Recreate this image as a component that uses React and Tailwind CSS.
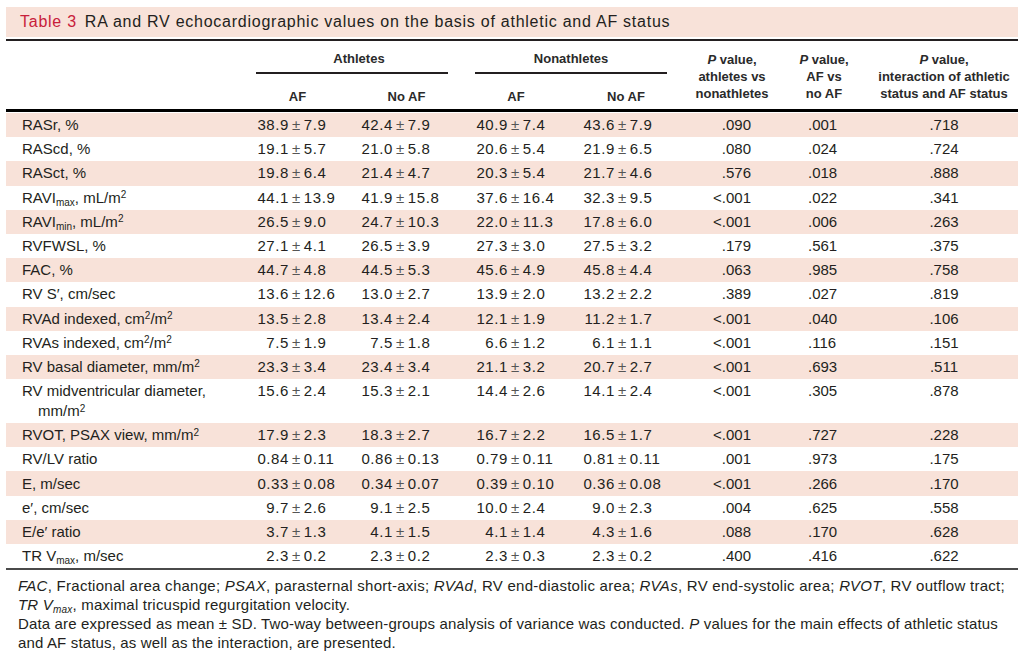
import React from "react";

const Sup = ({ children }) => <sup className="text-[10px] top-[-4.5px]">{children}</sup>;
const Sub = ({ children }) => <sub className="text-[10px] bottom-[-3px]">{children}</sub>;

const rows = [
  { l: <>RASr, %</>, v: [["38.9", "7.9"], ["42.4", "7.9"], ["40.9", "7.4"], ["43.6", "7.9"]], p: [".090", ".001", ".718"] },
  { l: <>RAScd, %</>, v: [["19.1", "5.7"], ["21.0", "5.8"], ["20.6", "5.4"], ["21.9", "6.5"]], p: [".080", ".024", ".724"] },
  { l: <>RASct, %</>, v: [["19.8", "6.4"], ["21.4", "4.7"], ["20.3", "5.4"], ["21.7", "4.6"]], p: [".576", ".018", ".888"] },
  { l: <>RAVI<Sub>max</Sub>, mL/m<Sup>2</Sup></>, v: [["44.1", "13.9"], ["41.9", "15.8"], ["37.6", "16.4"], ["32.3", "9.5"]], p: ["<.001", ".022", ".341"] },
  { l: <>RAVI<Sub>min</Sub>, mL/m<Sup>2</Sup></>, v: [["26.5", "9.0"], ["24.7", "10.3"], ["22.0", "11.3"], ["17.8", "6.0"]], p: ["<.001", ".006", ".263"] },
  { l: <>RVFWSL, %</>, v: [["27.1", "4.1"], ["26.5", "3.9"], ["27.3", "3.0"], ["27.5", "3.2"]], p: [".179", ".561", ".375"] },
  { l: <>FAC, %</>, v: [["44.7", "4.8"], ["44.5", "5.3"], ["45.6", "4.9"], ["45.8", "4.4"]], p: [".063", ".985", ".758"] },
  { l: <>RV S′, cm/sec</>, v: [["13.6", "12.6"], ["13.0", "2.7"], ["13.9", "2.0"], ["13.2", "2.2"]], p: [".389", ".027", ".819"] },
  { l: <>RVAd indexed, cm<Sup>2</Sup>/m<Sup>2</Sup></>, v: [["13.5", "2.8"], ["13.4", "2.4"], ["12.1", "1.9"], ["11.2", "1.7"]], p: ["<.001", ".040", ".106"] },
  { l: <>RVAs indexed, cm<Sup>2</Sup>/m<Sup>2</Sup></>, v: [["7.5", "1.9"], ["7.5", "1.8"], ["6.6", "1.2"], ["6.1", "1.1"]], p: ["<.001", ".116", ".151"] },
  { l: <>RV basal diameter, mm/m<Sup>2</Sup></>, v: [["23.3", "3.4"], ["23.4", "3.4"], ["21.1", "3.2"], ["20.7", "2.7"]], p: ["<.001", ".693", ".511"] },
  { l: <>RV midventricular diameter,<br />mm/m<Sup>2</Sup></>, v: [["15.6", "2.4"], ["15.3", "2.1"], ["14.4", "2.6"], ["14.1", "2.4"]], p: ["<.001", ".305", ".878"], tall: true },
  { l: <>RVOT, PSAX view, mm/m<Sup>2</Sup></>, v: [["17.9", "2.3"], ["18.3", "2.7"], ["16.7", "2.2"], ["16.5", "1.7"]], p: ["<.001", ".727", ".228"] },
  { l: <>RV/LV ratio</>, v: [["0.84", "0.11"], ["0.86", "0.13"], ["0.79", "0.11"], ["0.81", "0.11"]], p: [".001", ".973", ".175"] },
  { l: <>E, m/sec</>, v: [["0.33", "0.08"], ["0.34", "0.07"], ["0.39", "0.10"], ["0.36", "0.08"]], p: ["<.001", ".266", ".170"] },
  { l: <>e′, cm/sec</>, v: [["9.7", "2.6"], ["9.1", "2.5"], ["10.0", "2.4"], ["9.0", "2.3"]], p: [".004", ".625", ".558"] },
  { l: <>E/e′ ratio</>, v: [["3.7", "1.3"], ["4.1", "1.5"], ["4.1", "1.4"], ["4.3", "1.6"]], p: [".088", ".170", ".628"] },
  { l: <>TR V<Sub>max</Sub>, m/sec</>, v: [["2.3", "0.2"], ["2.3", "0.2"], ["2.3", "0.3"], ["2.3", "0.2"]], p: [".400", ".416", ".622"] },
];

const colW = ["w-[105px]", "w-[113px]", "w-[110px]", "w-[108px]"];
const boxW = ["w-[39px]", "w-[38px]", "w-[40px]", "w-[37px]"];

function Val({ a, b, i }) {
  return (
    <div className={`${colW[i]} shrink-0 flex whitespace-nowrap tracking-[0.6px]`}>
      <span className={`${boxW[i]} shrink-0 text-right`}>{a}</span>
      <span className="ml-[3px] text-[#555]">±</span>
      <span className="ml-[3px]">{b}</span>
    </div>
  );
}

function Row({ r, idx }) {
  const pink = idx % 2 === 0 ? "bg-[#f8e2d9]" : "bg-white";
  return (
    <div className={`${pink} flex ${r.tall ? "h-[44px] items-start pt-[2px] leading-[20px]" : "h-[24.2px] items-center leading-[20px]"}`}>
      <div className={`w-[244px] shrink-0 whitespace-nowrap ${r.tall ? "pl-[32px] -indent-4" : "pl-[16px]"}`}>{r.l}</div>
      {r.v.map((v, i) => (
        <Val key={i} a={v[0]} b={v[1]} i={i} />
      ))}
      <div className="w-[92px] shrink-0 text-right pr-[27px]">{r.p[0]}</div>
      <div className="w-[92px] shrink-0 pl-[30px]">{r.p[1]}</div>
      <div className="w-[148px] shrink-0 text-center">{r.p[2]}</div>
    </div>
  );
}

export default function App() {
  return (
    <div className="w-[1024px] h-[664px] bg-white text-[#231f20] font-['Liberation_Sans',Arial,sans-serif] overflow-hidden">
      <div className="pt-[7px] px-[6px]">
        {/* Title */}
        <div className="h-[30px] bg-[#f8e2d9] flex items-center pl-[14px] text-[16px] tracking-[0.75px] whitespace-nowrap">
          <span className="text-[#c8203a]">Table 3</span>
          <span className="ml-[8px]">RA and RV echocardiographic values on the basis of athletic and AF status</span>
        </div>
        <div className="mt-[2px] h-[2px] bg-[#231f20]" />

        {/* Header */}
        <div className="h-[68px] flex text-[13px] font-bold leading-[17px] text-[#2a2a2a]">
          <div className="w-[244px] shrink-0" />
          <div className="w-[218px] shrink-0 flex flex-col pt-[9px]">
            <div className="text-center">Athletes</div>
            <div className="mt-[5px] ml-[6px] mr-[20px] h-[2px] bg-[#231f20]" />
            <div className="mt-[14px] flex">
              <div className="w-[105px] text-center pr-[10px]">AF</div>
              <div className="w-[113px] text-center pr-[10px]">No AF</div>
            </div>
          </div>
          <div className="w-[218px] shrink-0 flex flex-col pt-[9px]">
            <div className="text-center pr-[12px]">Nonathletes</div>
            <div className="mt-[5px] ml-[7px] mr-[19px] h-[2px] bg-[#231f20]" />
            <div className="mt-[14px] flex">
              <div className="w-[110px] text-center pr-[14px]">AF</div>
              <div className="w-[108px] text-center pr-[12px]">No AF</div>
            </div>
          </div>
          <div className="w-[92px] shrink-0 text-center pt-[10px]">
            <div><i>P</i> value,</div>
            <div>athletes vs</div>
            <div>nonathletes</div>
          </div>
          <div className="w-[92px] shrink-0 text-center pt-[10px]">
            <div><i>P</i> value,</div>
            <div>AF vs</div>
            <div>no AF</div>
          </div>
          <div className="w-[148px] shrink-0 text-center pt-[10px]">
            <div><i>P</i> value,</div>
            <div>interaction of athletic</div>
            <div>status and AF status</div>
          </div>
        </div>
        <div className="h-[3px] bg-black" />

        {/* Body */}
        <div className="mt-[1px] text-[15px]">
          {rows.map((r, i) => (
            <Row key={i} r={r} idx={i} />
          ))}
        </div>
        <div className="h-[2px] bg-[#4a4a4a]" />

        {/* Footnote */}
        <div className="pt-[6px] pl-[12px] text-[15px] leading-[19px] whitespace-nowrap">
          <div className="tracking-[0.27px]">
            <i>FAC</i>, Fractional area change; <i>PSAX</i>, parasternal short-axis; <i>RVAd</i>, RV end-diastolic area; <i>RVAs</i>, RV end-systolic area; <i>RVOT</i>, RV outflow tract;
          </div>
          <div className="tracking-[0.2px]">
            <i>TR V<Sub>max</Sub></i>, maximal tricuspid regurgitation velocity.
          </div>
          <div className="tracking-[0.15px]">
            Data are expressed as mean ± SD. Two-way between-groups analysis of variance was conducted. <i>P</i> values for the main effects of athletic status
          </div>
          <div className="tracking-[0.15px]">and AF status, as well as the interaction, are presented.</div>
        </div>
      </div>
    </div>
  );
}
